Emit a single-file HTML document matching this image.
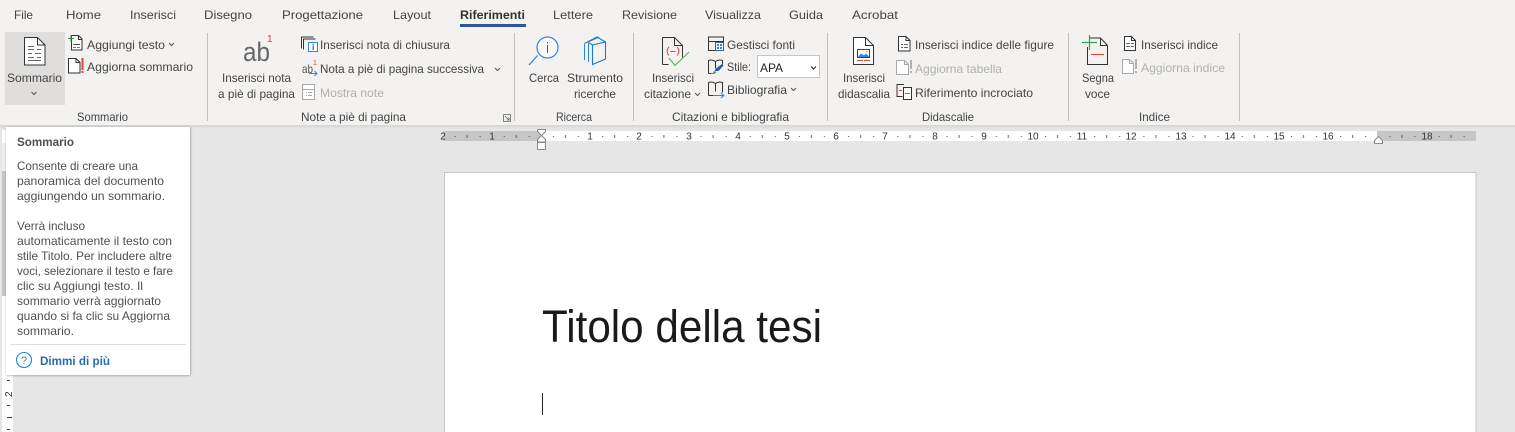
<!DOCTYPE html>
<html lang="it"><head><meta charset="utf-8"><title>Riferimenti</title>
<style>
html,body{margin:0;padding:0;width:1515px;height:432px;overflow:hidden;background:#e6e6e6}
svg{display:block}
text{font-family:"Liberation Sans",sans-serif;font-size:12px;fill:#444;}
.d{fill:#b1b1b1}
.b{font-weight:bold}
.t{fill:#505050}
.r{font-size:10px;fill:#333}
.k{fill:none;stroke:#333;stroke-width:1}
.w{fill:#fff;stroke:#333;stroke-width:1}
.a{fill:#fff;stroke:#a8a8a8;stroke-width:1}
.c{fill:none;stroke:#555;stroke-width:1}
</style></head><body>
<svg width="1515" height="432" viewBox="0 0 1515 432" xmlns="http://www.w3.org/2000/svg">
<defs>
<linearGradient id="sh" x1="0" y1="0" x2="0" y2="1"><stop offset="0" stop-color="#d6d5d4"/><stop offset="1" stop-color="#e6e6e6"/></linearGradient>
<pattern id="tk" x="442.6" y="131" width="49.2" height="10" patternUnits="userSpaceOnUse">
<rect x="12" y="5" width="1" height="1" fill="#555"/><rect x="24" y="4" width="1" height="3" fill="#666"/><rect x="37" y="5" width="1" height="1" fill="#555"/>
</pattern>
<filter id="ds" x="-10%" y="-10%" width="120%" height="120%"><feDropShadow dx="0.5" dy="0.5" stdDeviation="1.2" flood-color="#000" flood-opacity=".35"/></filter>
</defs>

<rect width="1515" height="125" fill="#f3f2f1"/>
<rect y="125" width="1515" height="4" fill="url(#sh)"/>

<!-- tabs -->
<g>
<text x="14" y="19" textLength="19" lengthAdjust="spacingAndGlyphs">File</text>
<text x="66" y="19" textLength="35" lengthAdjust="spacingAndGlyphs">Home</text>
<text x="130" y="19" textLength="46" lengthAdjust="spacingAndGlyphs">Inserisci</text>
<text x="204" y="19" textLength="48" lengthAdjust="spacingAndGlyphs">Disegno</text>
<text x="282" y="19" textLength="81" lengthAdjust="spacingAndGlyphs">Progettazione</text>
<text x="393" y="19" textLength="38" lengthAdjust="spacingAndGlyphs">Layout</text>
<text x="460" y="19" textLength="65" lengthAdjust="spacingAndGlyphs" class="b" style="fill:#333">Riferimenti</text>
<text x="553" y="19" textLength="40" lengthAdjust="spacingAndGlyphs">Lettere</text>
<text x="622" y="19" textLength="55" lengthAdjust="spacingAndGlyphs">Revisione</text>
<text x="705" y="19" textLength="56" lengthAdjust="spacingAndGlyphs">Visualizza</text>
<text x="789" y="19" textLength="34" lengthAdjust="spacingAndGlyphs">Guida</text>
<text x="852" y="19" textLength="46" lengthAdjust="spacingAndGlyphs">Acrobat</text>
</g>
<rect x="460" y="24" width="66" height="3" fill="#2b579a"/>

<!-- separators -->
<g fill="#c2c1c0">
<rect x="207" y="33" width="1" height="88"/><rect x="514" y="33" width="1" height="88"/><rect x="633" y="33" width="1" height="88"/><rect x="827" y="33" width="1" height="88"/><rect x="1068" y="33" width="1" height="88"/><rect x="1239" y="33" width="1" height="88"/>
</g>

<!-- Sommario group -->
<rect x="5" y="32" width="60" height="73" fill="#dfdedd"/>
<path class="w" d="M24.500 37.500h13l7.500 7.500v20h-20.500z"/><path class="k" d="M37.500 37.500v7.500h7.500"/>
<path d="M28 46.500h6M28 49.500h6M37 49.500h4M28 53.500h4M35 53.500h6M28 57.500h6M37 57.500h4M28 60.500h13" stroke="#666" fill="none"/>
<text x="7" y="82" textLength="55" lengthAdjust="spacingAndGlyphs">Sommario</text>
<path class="c" d="M31.500 92l2.500 2.500 2.500-2.500"/>

<path class="w" d="M71.500 38v-2.500h7l3.500 3.500v11h-10.500z"/><path class="k" d="M78.500 35.500v4h3.500"/>
<path d="M68 38.500h6M71 35v6.500" stroke="#2e8b45" fill="none"/>
<path d="M73 44.500h7" stroke="#555" fill="none"/><path d="M73 47.500h3M77 47.500h3" stroke="#2b88d8" fill="none"/>
<text x="87" y="49" textLength="78" lengthAdjust="spacingAndGlyphs">Aggiungi testo</text>
<path class="c" d="M169 43l2.500 2.500 2.500-2.500"/>

<path class="w" d="M68.500 58.500h7.500l4 4v10.500h-11.500z"/><path class="k" d="M76 58.500v4h4"/>
<rect x="81.500" y="58" width="2" height="12" fill="#e8403c"/><rect x="81.500" y="71" width="2" height="2" fill="#e8403c"/>
<text x="87" y="71" textLength="106" lengthAdjust="spacingAndGlyphs">Aggiorna sommario</text>
<text x="77" y="121" textLength="51" lengthAdjust="spacingAndGlyphs">Sommario</text>

<!-- Note -->
<text x="243" y="61" style="font-size:27px;fill:#666" textLength="27" lengthAdjust="spacingAndGlyphs">ab</text>
<text x="267" y="42" style="font-size:10px;fill:#e8403c">1</text>
<text x="222" y="82" textLength="69" lengthAdjust="spacingAndGlyphs">Inserisci nota</text>
<text x="218" y="98" textLength="77" lengthAdjust="spacingAndGlyphs">a piè di pagina</text>

<path class="k" d="M301.500 48.500v-11.500h12M303.500 49.500v-10.500h12"/>
<rect x="308.500" y="42.500" width="9" height="9" fill="#fff" stroke="#2b88d8"/>
<rect x="312.500" y="44" width="1.500" height="1.500" fill="#2b88d8"/><rect x="312.500" y="46" width="1.500" height="4" fill="#2b88d8"/>
<text x="320" y="49" textLength="130" lengthAdjust="spacingAndGlyphs">Inserisci nota di chiusura</text>

<text x="302" y="73" style="font-size:12px;fill:#555" textLength="11" lengthAdjust="spacingAndGlyphs">ab</text>
<text x="313" y="65" style="font-size:7px;fill:#e8403c">1</text>
<path d="M309 73.500h8M314.500 71l2.500 2.500-2.500 2.500" stroke="#2b88d8" fill="none"/>
<text x="320" y="73" textLength="164" lengthAdjust="spacingAndGlyphs">Nota a piè di pagina successiva</text>
<path class="c" d="M495 68l2.500 2.500 2.500-2.500"/>

<rect class="a" x="302.500" y="84.500" width="12" height="15"/><path d="M303 89.500h11M306 92.500h1M308 92.500h4M306 95.500h1M308 95.500h4" stroke="#a8a8a8" fill="none"/>
<text x="320" y="97" textLength="64" lengthAdjust="spacingAndGlyphs" class="d">Mostra note</text>
<text x="301" y="121" textLength="105" lengthAdjust="spacingAndGlyphs">Note a piè di pagina</text>
<path d="M503.500 114.500h7v7M503.500 114.500v7h7M505 116l4 4M509 117.500v2.500h-2.500" stroke="#666" fill="none" stroke-width=".8"/>

<!-- Ricerca -->
<circle cx="547.500" cy="47.500" r="10.500" fill="#fafafa" stroke="#2b88d8" stroke-width="1.200"/>
<rect x="547" y="45" width="1" height="8" fill="#555"/><rect x="547" y="42" width="1" height="1.500" fill="#555"/>
<path d="M537.500 55.500l-8.500 9.500" stroke="#2b88d8" stroke-width="1.300" fill="none"/>
<text x="529" y="82" textLength="30" lengthAdjust="spacingAndGlyphs">Cerca</text>

<path d="M584.500 44v16M588.500 43v19" stroke="#2b88d8" fill="none"/>
<path d="M592.500 45v19.500l13-5.500v-17zM584.500 43.500l12.500-6.500 8.500 5M592.500 45l-4-2.500M589 41.500l10-4.500" fill="none" stroke="#1f7ac4" stroke-width="1.100"/>
<text x="567" y="82" textLength="56" lengthAdjust="spacingAndGlyphs">Strumento</text>
<text x="574" y="98" textLength="42" lengthAdjust="spacingAndGlyphs">ricerche</text>
<text x="556" y="121" textLength="36" lengthAdjust="spacingAndGlyphs">Ricerca</text>

<!-- Citazioni -->
<path class="k" d="M662.500 64.500v-27h12l8 8v12M662.500 64.500h6M674.500 37.500v8h8"/>
<path d="M669 47c-2.500 2.500-2.500 6 0 8.500M677 47c2.500 2.500 2.500 6 0 8.500M670.500 51.500h5" stroke="#e8403c" fill="none"/>
<path d="M669 58l6 7.500 14-13.500" stroke="#5cb85c" stroke-width="1.200" fill="none"/>
<text x="652" y="82" textLength="42" lengthAdjust="spacingAndGlyphs">Inserisci</text>
<text x="644" y="98" textLength="47" lengthAdjust="spacingAndGlyphs">citazione</text>
<path class="c" d="M695 93l2.500 2.500 2.500-2.500"/>

<path class="k" d="M715 50.500h-6.500v-13.500h15v5"/><path d="M708 41.500h16" stroke="#333" fill="none"/>
<rect x="715.500" y="42.500" width="8" height="8" fill="#fff" stroke="#333" stroke-width=".8"/>
<rect x="717" y="44" width="2" height="2" fill="#2b88d8"/><rect x="720" y="44" width="2" height="2" fill="#2b88d8"/><rect x="717" y="47" width="2" height="2" fill="#2b88d8"/><rect x="720" y="47" width="2" height="2" fill="#2b88d8"/>
<text x="727" y="49" textLength="68" lengthAdjust="spacingAndGlyphs">Gestisci fonti</text>

<path class="k" d="M708.500 73.500v-13c2.500-1 5-.5 7 1 2-1.500 4.500-2 7-1v4M715.500 61.500v7M708.500 73.500h3"/>
<path d="M714.500 71l1.500-2.500 6-4.500 1.500 1.500-5 5.500z" fill="#2b5c94"/><path d="M711.500 74l3-3 2 1-2 2z" fill="#808080"/>
<text x="727" y="71" textLength="24" lengthAdjust="spacingAndGlyphs">Stile:</text>
<rect x="757.500" y="55.500" width="62" height="22" fill="#fff" stroke="#c6c6c6"/>
<text x="760" y="72" textLength="23" lengthAdjust="spacingAndGlyphs" style="fill:#222">APA</text>
<path d="M811 66.500l2.500 2.500 2.500-2.500" fill="none" stroke="#222"/>

<path class="k" d="M708.500 95.500v-13c2.500-1 5-.5 7 1 2-1.500 4.500-2 7-1v10M715.500 83.500v8M708.500 95.500h5"/>
<path d="M713 95.500h11M721 93l3 2.500-3 2.500" stroke="#2b88d8" fill="none"/>
<text x="727" y="94" textLength="60" lengthAdjust="spacingAndGlyphs">Bibliografia</text>
<path class="c" d="M791 88l2.500 2.500 2.500-2.500"/>
<text x="672" y="121" textLength="117" lengthAdjust="spacingAndGlyphs">Citazioni e bibliografia</text>

<!-- Didascalie -->
<path class="w" d="M853.500 37.500h12l8 8v19h-20z"/><path class="k" d="M865.500 37.500v8h8"/>
<rect x="857.500" y="49.500" width="12" height="8" fill="#fff" stroke="#444"/>
<path d="M858 57l3-3.500 3 2 2-2 3 3v.5z" fill="#2b88d8"/><rect x="866" y="51" width="1.500" height="1.500" fill="#e8a33c"/>
<path d="M857 60.500h6M864 60.500h6" stroke="#e8403c" fill="none"/>
<text x="843" y="82" textLength="42" lengthAdjust="spacingAndGlyphs">Inserisci</text>
<text x="838" y="98" textLength="52" lengthAdjust="spacingAndGlyphs">didascalia</text>

<path class="w" d="M898.500 36.500h7.500l4 4v10.500h-11.500z"/><path class="k" d="M906 36.500v4h4"/>
<path d="M901 44.500h2M904 44.500h4M901 47.500h2M904 47.500h4" stroke="#666" fill="none"/>
<text x="915" y="49" textLength="139" lengthAdjust="spacingAndGlyphs">Inserisci indice delle figure</text>

<path class="a" d="M896.500 60.500h8l4 4v10h-12z"/><path d="M904.500 60.500v4h4" stroke="#a8a8a8" fill="none"/>
<rect x="910" y="60" width="2" height="9" fill="#b1b1b1"/><rect x="910" y="71" width="2" height="2" fill="#b1b1b1"/>
<text x="915" y="73" textLength="87" lengthAdjust="spacingAndGlyphs" class="d">Aggiorna tabella</text>

<path class="k" d="M902.500 96.500h-5.500v-12h7"/><path d="M899 90.500h3" stroke="#e8403c" fill="none"/>
<rect x="903.500" y="87.500" width="8" height="12" fill="#fff" stroke="#333"/><path d="M905 93.500h5" stroke="#e8403c" fill="none"/>
<text x="915" y="97" textLength="118" lengthAdjust="spacingAndGlyphs">Riferimento incrociato</text>
<text x="922" y="121" textLength="52" lengthAdjust="spacingAndGlyphs">Didascalie</text>

<!-- Indice -->
<path class="k" d="M1087.500 47v17.500h20v-19l-7-7.500h-11"/><path class="k" d="M1100.500 38v7.500h7"/>
<path d="M1082 42.500h15M1089.500 35v15" stroke="#3f9c5a" stroke-width="1.200" fill="none"/>
<path d="M1091 54.500h13" stroke="#e8403c" fill="none"/>
<text x="1082" y="82" textLength="32" lengthAdjust="spacingAndGlyphs">Segna</text>
<text x="1085" y="98" textLength="25" lengthAdjust="spacingAndGlyphs">voce</text>

<path class="w" d="M1124.500 36.500h7l4 4v10h-11z"/><path class="k" d="M1131.500 36.500v4h4"/>
<path d="M1126 43.500h4M1131 43.500h3M1126 46.500h4M1131 46.500h3" stroke="#666" fill="none"/>
<text x="1141" y="49" textLength="77" lengthAdjust="spacingAndGlyphs">Inserisci indice</text>

<path class="a" d="M1122.500 59.500h7l4 4v10h-11z"/><path d="M1129.500 59.500v4h4" stroke="#a8a8a8" fill="none"/>
<rect x="1135" y="59" width="2" height="10" fill="#b1b1b1"/><rect x="1135" y="71" width="2" height="2" fill="#b1b1b1"/>
<text x="1141" y="72" textLength="84" lengthAdjust="spacingAndGlyphs" class="d">Aggiorna indice</text>
<text x="1139" y="121" textLength="31" lengthAdjust="spacingAndGlyphs">Indice</text>

<!-- horizontal ruler -->
<rect x="443" y="131" width="98" height="10" fill="#c6c6c6"/>
<rect x="541" y="131" width="836" height="10" fill="#fff"/>
<rect x="1377" y="131" width="99" height="10" fill="#c6c6c6"/>
<rect x="443" y="131" width="1033" height="10" fill="url(#tk)"/>
<g text-anchor="middle">
<text class="r" x="443" y="139.500" text-anchor="middle">2</text><text class="r" x="492" y="139.500" text-anchor="middle">1</text>
<text class="r" x="590" y="139.500" text-anchor="middle">1</text><text class="r" x="639" y="139.500" text-anchor="middle">2</text><text class="r" x="689" y="139.500" text-anchor="middle">3</text><text class="r" x="738" y="139.500" text-anchor="middle">4</text><text class="r" x="787" y="139.500" text-anchor="middle">5</text><text class="r" x="836" y="139.500" text-anchor="middle">6</text><text class="r" x="885" y="139.500" text-anchor="middle">7</text><text class="r" x="935" y="139.500" text-anchor="middle">8</text><text class="r" x="984" y="139.500" text-anchor="middle">9</text><text class="r" x="1033" y="139.500" text-anchor="middle">10</text><text class="r" x="1082" y="139.500" text-anchor="middle">11</text><text class="r" x="1131" y="139.500" text-anchor="middle">12</text><text class="r" x="1181" y="139.500" text-anchor="middle">13</text><text class="r" x="1230" y="139.500" text-anchor="middle">14</text><text class="r" x="1279" y="139.500" text-anchor="middle">15</text><text class="r" x="1328" y="139.500" text-anchor="middle">16</text><text class="r" x="1427" y="139.500" text-anchor="middle">18</text>
</g>
<path d="M537.500 129.500h8v2l-4 4 4 4v2.500h-8v-2.500l4-4-4-4z" fill="#fff" stroke="#8a8a8a"/>
<rect x="537.500" y="142.500" width="8" height="7" fill="#fff" stroke="#8a8a8a"/>
<path d="M1374.500 143.500v-3l4-4 4 4v3z" fill="#fff" stroke="#8a8a8a"/>

<!-- page -->
<rect x="444.500" y="172.500" width="1031.500" height="270" fill="#fff" stroke="#c6c6c6"/>
<text x="542" y="342" textLength="280" lengthAdjust="spacingAndGlyphs" style="font-size:45px;fill:#1a1a1a">Titolo della tesi</text>
<rect x="542" y="393" width="1" height="22" fill="#222"/>

<!-- vertical ruler -->
<rect x="2" y="130" width="11" height="302" fill="#fff"/>
<rect x="2" y="143" width="11" height="28" fill="#eeeeee"/>
<rect x="2" y="171" width="11" height="125" fill="#c6c6c6"/>
<rect x="7" y="380" width="3" height="1" fill="#444"/>
<text class="r" transform="translate(12 397) rotate(-90)" x="0" y="0">2</text>
<rect x="7" y="405" width="3" height="1" fill="#444"/>
<rect x="7" y="417" width="5" height="1" fill="#444"/>
<rect x="7" y="429" width="3" height="1" fill="#444"/>

<!-- tooltip -->
<rect x="6" y="127" width="184" height="248" fill="#fff" filter="url(#ds)"/>
<text x="17" y="146" textLength="57" lengthAdjust="spacingAndGlyphs" class="b t">Sommario</text>
<g>
<text class="t" x="17" y="170" textLength="121" lengthAdjust="spacingAndGlyphs">Consente di creare una</text>
<text class="t" x="17" y="185" textLength="147" lengthAdjust="spacingAndGlyphs">panoramica del documento</text>
<text class="t" x="17" y="200" textLength="148" lengthAdjust="spacingAndGlyphs">aggiungendo un sommario.</text>
<text class="t" x="17" y="230" textLength="68" lengthAdjust="spacingAndGlyphs">Verrà incluso</text>
<text class="t" x="17" y="245" textLength="155" lengthAdjust="spacingAndGlyphs">automaticamente il testo con</text>
<text class="t" x="17" y="260" textLength="155" lengthAdjust="spacingAndGlyphs">stile Titolo. Per includere altre</text>
<text class="t" x="17" y="275" textLength="156" lengthAdjust="spacingAndGlyphs">voci, selezionare il testo e fare</text>
<text class="t" x="17" y="290" textLength="126" lengthAdjust="spacingAndGlyphs">clic su Aggiungi testo. Il</text>
<text class="t" x="17" y="305" textLength="144" lengthAdjust="spacingAndGlyphs">sommario verrà aggiornato</text>
<text class="t" x="17" y="320" textLength="153" lengthAdjust="spacingAndGlyphs">quando si fa clic su Aggiorna</text>
<text class="t" x="17" y="335" textLength="57" lengthAdjust="spacingAndGlyphs">sommario.</text>
</g>
<rect x="10" y="344" width="176" height="1" fill="#e1dfdd"/>
<circle cx="24" cy="360" r="7.500" fill="#fff" stroke="#2b88d8" stroke-width="1.100"/>
<text x="24" y="364" text-anchor="middle" style="font-size:11px;fill:#2b88d8">?</text>
<text x="40" y="365" textLength="70" lengthAdjust="spacingAndGlyphs" class="b" style="fill:#2b6ca8">Dimmi di più</text>
</svg>
</body></html>
